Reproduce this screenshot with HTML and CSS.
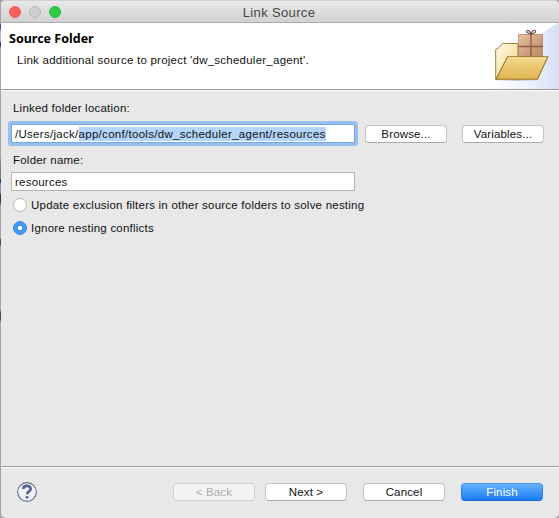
FILE: index.html
```html
<!DOCTYPE html>
<html lang="en">
<head>
<meta charset="utf-8">
<title>Link Source</title>
<link rel="stylesheet" href="styles.css">
</head>
<body>
<main class="window">
  <header class="titlebar">
    <div class="lights"><i class="red"></i><i class="gray"></i><i class="green"></i></div>
    <span class="title">Link Source</span>
  </header>
  <section class="banner">
    <div class="banner-text">
      <h1>Source Folder</h1>
      <p>Link additional source to project 'dw_scheduler_agent'.</p>
    </div>
    <svg class="art" width="90" height="66" viewBox="469 23 90 66">
      <defs>
        <linearGradient id="sky" x1="0" y1="0" x2="1" y2="0"><stop offset="0" stop-color="#fff"/><stop offset=".5" stop-color="#f0f4fc"/><stop offset="1" stop-color="#d6e0f5"/></linearGradient>
        <linearGradient id="front" x1="0" y1="0" x2="0" y2="1"><stop offset="0" stop-color="#f3da8c"/><stop offset="1" stop-color="#dfb450"/></linearGradient>
        <linearGradient id="back" x1="0" y1="0" x2="1" y2="1"><stop offset="0" stop-color="#fffbe4"/><stop offset="1" stop-color="#f0d489"/></linearGradient>
        <linearGradient id="box" x1="0" y1="0" x2="1" y2="1"><stop offset="0" stop-color="#e8c3a0"/><stop offset="1" stop-color="#b98663"/></linearGradient>
        <linearGradient id="shade"><stop offset="0" stop-color="#b4b9c8" stop-opacity="0"/><stop offset=".5" stop-color="#9da5b9" stop-opacity=".6"/><stop offset="1" stop-color="#b4b9c8" stop-opacity="0"/></linearGradient>
      </defs>
      <path d="M559 23V89H489Q516 78 529 50Q541 30 559 23Z" fill="url(#sky)"/>
      <path d="M490 79H544V81H490Z" fill="url(#shade)"/>
      <path d="M495.700 79V49.500L499 47.500L502.500 43.500H518V57L498 79Z" fill="url(#back)" stroke="#9c8136" stroke-width="1"/>
      <path d="M518.500 34.500H542.500V57H518.500Z" fill="url(#box)" stroke="#a97d5c" stroke-width=".7"/>
      <path d="M518.500 46.500H543M531 34V57" stroke="#8f5a43" stroke-width="1.300"/>
      <path d="M531 34Q524 32 527.500 30.500Q530 30 531 34Q532.500 29.500 535 30.500Q537.500 32.500 531 34" fill="none" stroke="#754b3b" stroke-width="1.100"/>
      <path d="M507.500 56.700H547.800L537.500 79.300H496Z" fill="url(#front)" stroke="#98752d" stroke-width="1.100"/>
      <path d="M508.500 58H546" stroke="#fbe9ae" stroke-width="1"/>
    </svg>
  </section>
  <section class="content">
    <label class="caption" for="loc">Linked folder location:</label>
    <div class="row">
      <div class="field focused" id="loc"><span>/Users/jack/</span><span class="selected">app/conf/tools/dw_scheduler_agent/resources</span></div>
      <button class="browse">Browse...</button>
      <button>Variables...</button>
    </div>
    <label class="caption second">Folder name:</label>
    <div class="field name"><span>resources</span></div>
    <div class="radio"><i></i><span>Update exclusion filters in other source folders to solve nesting</span></div>
    <div class="radio"><i class="on"></i><span>Ignore nesting conflicts</span></div>
  </section>
  <footer>
    <svg class="help" width="22" height="22" viewBox="0 0 22 22">
      <circle cx="11" cy="11" r="9.400" fill="#eef0f6" stroke="#626f96" stroke-width="1.100"/>
      <path d="M7.300 8C7.300 3.900 14.700 3.900 14.700 7.900C14.700 10.300 11.100 10.500 11.100 13.300" fill="none" stroke="#53618d" stroke-width="2.600"/>
      <circle cx="11.100" cy="16.300" r="1.400" fill="#53618d"/>
    </svg>
    <button class="disabled">&lt; Back</button>
    <button class="next">Next &gt;</button>
    <button class="cancel">Cancel</button>
    <button class="primary">Finish</button>
  </footer>
</main>
</body>
</html>
```
FILE: styles.css
```css
* { box-sizing: border-box; }
body { margin: 0; background: linear-gradient(#a5a5a7 0 23px, #4b3c8c 25px 28px, #b9b0d2 31px 41px, #3c2a7c 43px 46px, #a5a5a7 48px 155px, #777b88 165px 178px, #333 180px 182px, #99a 184px 192px, #334 195px 202px, #a5a5a7 206px 238px, #444 240px 244px, #a5a5a7 247px 310px, #444 313px 319px, #a5a5a7 322px); font: 11.5px/14px "Liberation Sans", sans-serif; letter-spacing: .22px; color: #111; overflow: hidden; }
.window { width: 558px; height: 518px; margin-left: 1px; display: flex; flex-direction: column; background: #e8e8e8; border-radius: 5px; overflow: hidden; }
.titlebar { height: 23px; flex: none; display: grid; grid-template-columns: 61px 1fr 63px; align-items: center; background: linear-gradient(#e9e9e9, #d2d2d2); border-top: 1px solid #d2d2d2; border-bottom: 1px solid #acacac; }
.lights { display: flex; gap: 8px; padding-left: 8px; }
.lights i { width: 12px; height: 12px; border-radius: 50%; border: 1px solid; }
.lights .red { background: #fc605b; border-color: #e9605b; }
.lights .gray { background: #d0d0d0; border-color: #b9b9b9; }
.lights .green { background: #2fca46; border-color: #2cb840; }
.title { text-align: center; font-size: 13px; letter-spacing: .35px; color: #464646; padding-top: 2px; }
.banner { height: 68px; flex: none; display: flex; justify-content: space-between; background: #fff; border-bottom: 1px solid #fff; box-shadow: inset 0 -1px #979797; }
.banner-text { padding: 8px 0 0 8px; }
h1 { margin: 0; font: bold 12.5px/16px "Noto Sans", sans-serif; letter-spacing: 0; color: #000; }
p { margin: 6px 0 0 8px; letter-spacing: .24px; }
.content { flex: 1; padding: 10px 14px 0 8px; }
.caption { display: block; margin-left: 4px; }
.row { display: flex; align-items: center; margin-top: 6px; height: 25px; }
.field { width: 344px; height: 19px; margin-left: 2px; padding: 0 3px; background: #fff; border: 1px solid #b5b5b5; display: flex; align-items: center; white-space: nowrap; }
.row .focused { border-color: #75a7e5; border-radius: 1px; box-shadow: 0 0 0 3px #98bfed; letter-spacing: .29px; }
.selected { background: #b3d5fb; }
button { width: 82px; height: 18px; padding: 0; border: 1px solid #c4c4c4; border-bottom-color: #aaa; border-radius: 4px; background: #fff; font: inherit; letter-spacing: .15px; color: #111; }
.browse { margin: 0 15px 0 10px; }
.second { margin-top: 7px; }
.name { margin-top: 5px; }
.radio { display: flex; align-items: center; height: 14px; gap: 4px; margin: 7px 0 9px 4px; }
.radio i { width: 14px; height: 14px; border: 1px solid #b7b7b7; border-radius: 50%; background: #fff; }
.radio .on { border-color: #388bea; background: radial-gradient(circle, #fff 0 1.8px, #4298f7 2.3px); }
footer { height: 52px; flex: none; display: flex; align-items: center; padding: 0 16px 1px 15px; border-top: 1px solid #999; box-shadow: inset 0 1px #fff; }
.help { margin-right: auto; }
.disabled { background: #f3f3f3; border-color: #d1d1d1; color: #aaa; }
.next { margin-left: 10px; }
.cancel { margin-left: 16px; }
.primary { margin-left: 16px; background: linear-gradient(#65b1fa, #1b7cf8); border-color: #4a98ee #3283ed #176ae5; color: #fff; }
```
